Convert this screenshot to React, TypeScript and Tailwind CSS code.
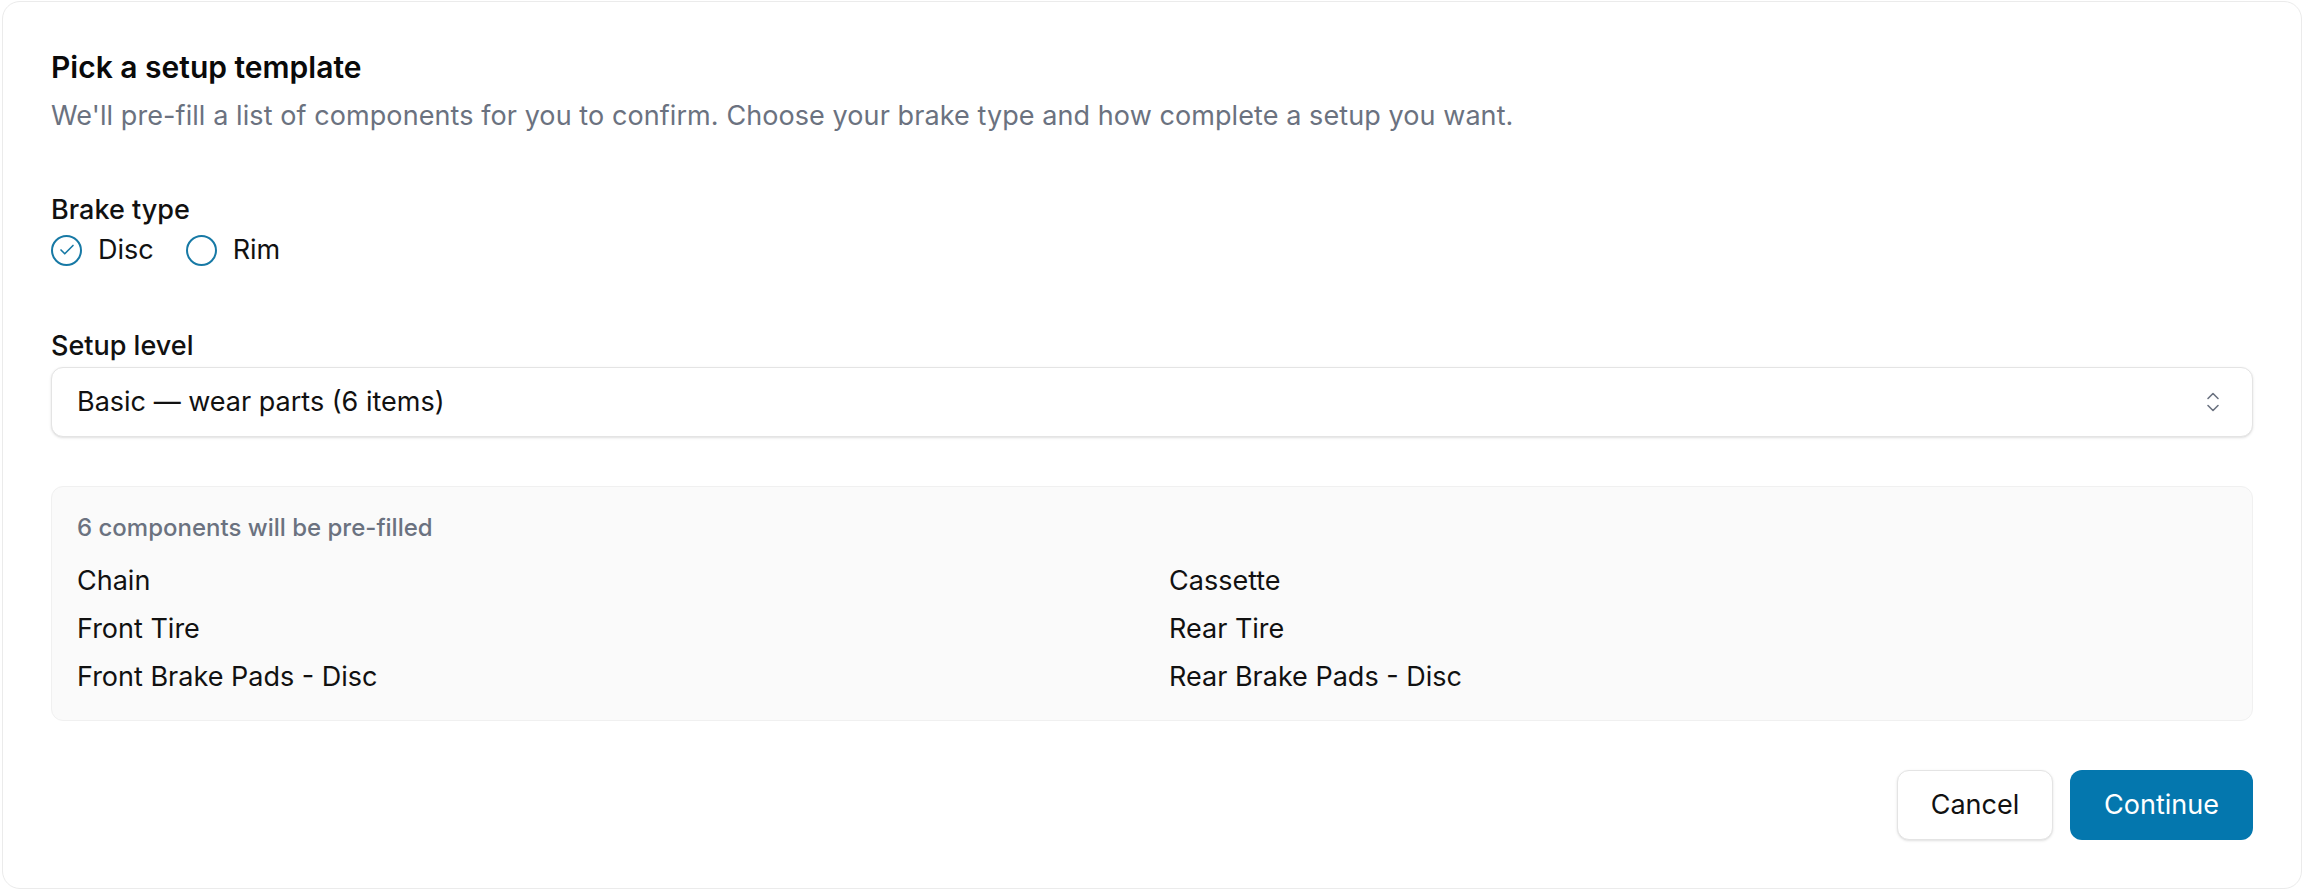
import { Check } from 'lucide-react';

const items: string[] = [
	'Chain',
	'Cassette',
	'Front Tire',
	'Rear Tire',
	'Front Brake Pads - Disc',
	'Rear Brake Pads - Disc',
];

function Radio({ label, checked }: { label: string; checked: boolean }) {
	return (
		<label className="flex items-center gap-[16px] cursor-pointer">
			<span className="w-[31px] h-[31px] rounded-full border-2 border-[#1779a5] flex items-center justify-center">
				{checked && <Check size={18} strokeWidth={2.2} className="text-[#1779a5]" />}
			</span>
			<span className="text-[27px] leading-[36px] text-[#111111]">{label}</span>
		</label>
	);
}

export default function App(): JSX.Element {
	return (
		<div className="min-h-screen bg-white pl-[2px] pt-[1px] font-['Inter',sans-serif] text-[#111111]">
			<div className="w-[2300px] h-[888px] border border-[#ebebeb] rounded-[18px] p-[48px] flex flex-col">
				<h2 className="text-[30px] leading-[34px] font-semibold text-[#0a0a0a]">
					Pick a setup template
				</h2>
				<p className="mt-[14px] text-[27px] leading-[36px] tracking-[0.08px] text-[#6b7280]">
					We'll pre-fill a list of components for you to confirm. Choose your brake type and how
					complete a setup you want.
				</p>

				<div className="mt-[58px]">
					<div className="text-[27px] leading-[36px] font-medium">Brake type</div>
					<div className="mt-[4px] flex items-center gap-[32px]">
						<Radio label="Disc" checked={true} />
						<Radio label="Rim" checked={false} />
					</div>
				</div>

				<div className="mt-[60px]">
					<div className="text-[27px] leading-[36px] font-medium">Setup level</div>
					<div className="mt-[3px] h-[70px] border border-[#e4e4e4] rounded-[12px] shadow-sm bg-white flex items-center justify-between pl-[25px] pr-[32px]">
						<span className="text-[27px] leading-[36px]">Basic — wear parts (6 items)</span>
						<svg width="14" height="22" viewBox="0 0 14 22" fill="none" stroke="#6b7280" strokeWidth="1.6" strokeLinecap="round" strokeLinejoin="round">
							<path d="M2 7.5 7 2.5l5 5" />
							<path d="M2 14.5l5 5 5-5" />
						</svg>
					</div>
				</div>

				<div className="mt-[49px] bg-[#fafafa] border border-[#f0f0f0] rounded-[12px] px-[25px] pt-[26px] pb-[25px]">
					<div className="text-[24px] leading-[30px] font-medium text-[#6b7280]">
						6 components will be pre-filled
					</div>
					<div className="mt-[20px] grid grid-cols-2 gap-x-[34px] gap-y-[12px]">
						{items.map((item) => (
							<div key={item} className="text-[27px] leading-[36px]">
								{item}
							</div>
						))}
					</div>
				</div>

				<div className="mt-auto flex justify-end gap-[17px]">
					<button
						type="button"
						className="h-[70px] w-[156px] rounded-[12px] border border-[#e4e4e4] bg-white shadow-sm text-[27px] text-[#111111]"
					>
						Cancel
					</button>
					<button
						type="button"
						className="h-[70px] w-[183px] rounded-[12px] bg-[#0477ae] text-[27px] text-white"
					>
						Continue
					</button>
				</div>
			</div>
		</div>
	);
}
